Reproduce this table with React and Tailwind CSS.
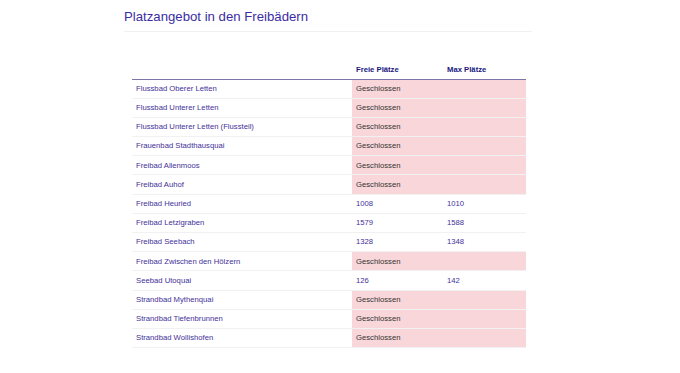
const baeder = [
  { name: 'Flussbad Oberer Letten', closed: true },
  { name: 'Flussbad Unterer Letten', closed: true },
  { name: 'Flussbad Unterer Letten (Flussteil)', closed: true },
  { name: 'Frauenbad Stadthausquai', closed: true },
  { name: 'Freibad Allenmoos', closed: true },
  { name: 'Freibad Auhof', closed: true },
  { name: 'Freibad Heuried', frei: 1008, max: 1010 },
  { name: 'Freibad Letzigraben', frei: 1579, max: 1588 },
  { name: 'Freibad Seebach', frei: 1328, max: 1348 },
  { name: 'Freibad Zwischen den Hölzern', closed: true },
  { name: 'Seebad Utoquai', frei: 126, max: 142 },
  { name: 'Strandbad Mythenquai', closed: true },
  { name: 'Strandbad Tiefenbrunnen', closed: true },
  { name: 'Strandbad Wollishofen', closed: true },
]

export default function App() {
  return (
    <div className="min-h-[373px] bg-white" style={{ fontFamily: '"Liberation Sans", Arial, sans-serif' }}>
      <div className="ml-[124px] w-[408px] pt-[8px]">
        {/* Titel */}
        <h1 className="text-[13.2px] leading-[17px] text-[#3b2ca3]">Platzangebot in den Freibädern</h1>
        <div className="mt-[6px] h-px bg-[#f0f0f3]" />

        {/* Tabelle */}
        <table className="mt-[30px] ml-[8px] w-[394px] table-fixed border-collapse text-[7.7px]">
          <colgroup>
            <col className="w-[220px]" />
            <col className="w-[91px]" />
            <col className="w-[83px]" />
          </colgroup>
          <thead>
            <tr className="h-[17px] border-b border-[#7d74a8]">
              <th />
              <th className="pl-[4px] pt-[2px] text-left align-top font-bold text-[#20177d]">Freie Plätze</th>
              <th className="pl-[4px] pt-[2px] text-left align-top font-bold text-[#20177d]">Max Plätze</th>
            </tr>
          </thead>
          <tbody>
            {baeder.map((b) => (
              <tr key={b.name} className="h-[19.2px] border-b border-[#f1f1f1]">
                <td className="pl-[4px] text-[#3f3199]">{b.name}</td>
                {b.closed ? (
                  <td colSpan={2} className="bg-[#f9d6da] pl-[4px] text-[#333]">Geschlossen</td>
                ) : (
                  <>
                    <td className="pl-[4px] text-[#3f3199]">{b.frei}</td>
                    <td className="pl-[4px] text-[#3f3199]">{b.max}</td>
                  </>
                )}
              </tr>
            ))}
          </tbody>
        </table>
      </div>
    </div>
  )
}
